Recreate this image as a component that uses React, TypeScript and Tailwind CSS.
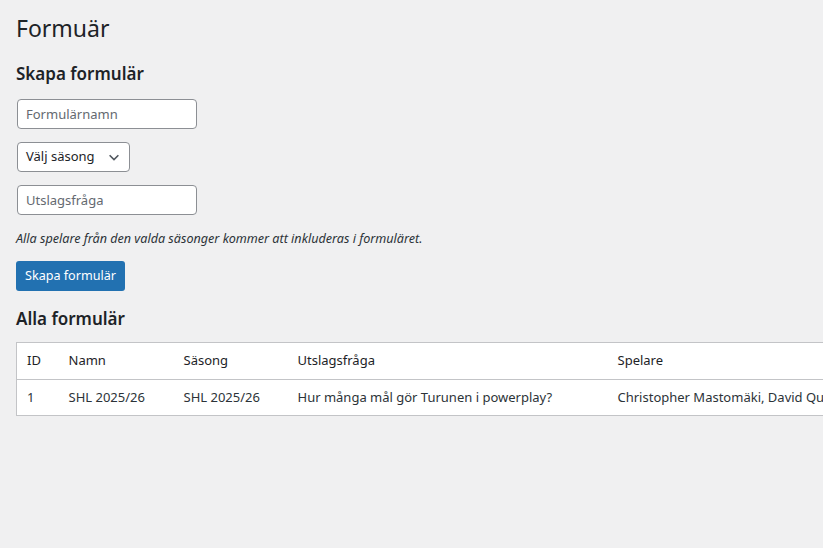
const font = { fontFamily: '"Noto Sans", "Open Sans", sans-serif' };

export default function App() {
  return (
    <div className="min-h-[548px] w-[823px] overflow-hidden bg-[#f0f0f1] pl-4 text-[#1d2327]" style={font}>
      <h1 className="pt-[14px] text-[23px] font-normal leading-[29px]">Formuär</h1>
      <h2 className="mt-[20px] text-[17px] font-semibold leading-[22px]">Skapa formulär</h2>
      <div className="mt-[14px] flex flex-col items-start">
        <input
          placeholder="Formulärnamn"
          className="ml-px h-[30px] w-[180px] rounded-[4px] border border-[#8c8f94] bg-white px-2 text-[13px] placeholder:text-[#646970] outline-none"
        />
        <div className="ml-px mt-[13px] flex h-[30px] w-[113px] items-center justify-between rounded-[4px] border border-[#8c8f94] bg-white pl-2 pr-2 text-[13px]">
          <span>Välj säsong</span>
          <svg width="14" height="14" viewBox="0 0 16 16" fill="none" stroke="#50575e" strokeWidth="1.8">
            <path d="M3 6l5 5 5-5" />
          </svg>
        </div>
        <input
          placeholder="Utslagsfråga"
          className="ml-px mt-[13px] h-[30px] w-[180px] rounded-[4px] border border-[#8c8f94] bg-white px-2 text-[13px] placeholder:text-[#646970] outline-none"
        />
        <p className="mt-[14px] text-[12.6px] italic leading-[20px] text-[#2c3338]">
          Alla spelare från den valda säsonger kommer att inkluderas i formuläret.
        </p>
        <button className="mt-[12px] h-[30px] rounded-[3px] bg-[#2271b1] px-[9px] text-[12.6px] text-white">
          Skapa formulär
        </button>
      </div>
      <h2 className="mt-[17px] text-[17px] font-semibold leading-[22px]">Alla formulär</h2>
      <table className="mt-[12px] w-[900px] border-collapse border border-[#c3c4c7] bg-white text-left text-[13px]">
        <thead>
          <tr className="h-[37px] border-b border-[#c3c4c7]">
            <th className="w-[52px] pl-[10px] font-normal">ID</th>
            <th className="w-[115px] font-normal">Namn</th>
            <th className="w-[114px] font-normal">Säsong</th>
            <th className="w-[320px] font-normal">Utslagsfråga</th>
            <th className="font-normal">Spelare</th>
          </tr>
        </thead>
        <tbody>
          <tr className="h-[36px] text-[#2c3338]">
            <td className="pl-[10px]">1</td>
            <td>SHL 2025/26</td>
            <td>SHL 2025/26</td>
            <td>Hur många mål gör Turunen i powerplay?</td>
            <td className="whitespace-nowrap">Christopher Mastomäki, David Quenneville</td>
          </tr>
        </tbody>
      </table>
    </div>
  );
}
